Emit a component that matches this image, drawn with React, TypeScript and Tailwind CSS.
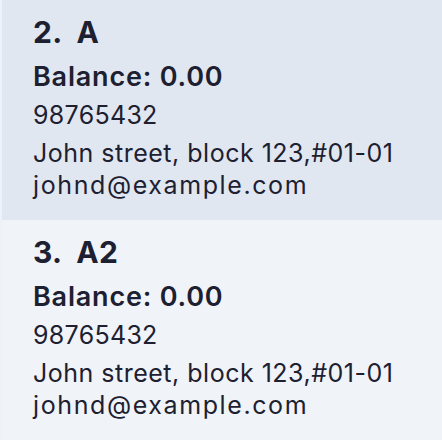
import React from "react";

const cards = [
  { idx: "2.", name: "A", bg: "bg-[#e1e7f0]" },
  { idx: "3.", name: "A2", bg: "bg-[#f0f3f8]" },
];

function Card({ idx, name, bg }: { idx: string; name: string; bg: string }) {
  return (
    <div className={`${bg} h-[220px] pl-[31px] pt-[14px] flex flex-col text-[#1d2030]`}>
      <div className="flex h-[36px] items-end leading-[36px] text-[30px] font-bold tracking-[0.3px]">
        <span>{idx}</span>
        <span className="ml-[14px]">{name}</span>
      </div>
      <div className="mt-[8px] h-[38px] leading-[38px] text-[27px] font-semibold tracking-[0.8px]">Balance: 0.00</div>
      <div className="h-[38px] leading-[38px] text-[25px] tracking-[0.3px]">98765432</div>
      <div className="h-[38px] leading-[38px] text-[25px] tracking-[0.5px]">John street, block 123,#01-01</div>
      <div className="-mt-[3px] h-[32px] leading-[32px] text-[25px] tracking-[1.6px]">johnd@example.com</div>
    </div>
  );
}

export default function App() {
  return (
    <div className="w-[442px] h-[440px] overflow-hidden flex bg-[#eef2f8]" style={{ fontFamily: "Inter, 'Noto Sans', sans-serif" }}>
      <div className="w-[2px] bg-[#eef2f8]" />
      <div className="flex-1 flex flex-col">
        {cards.map((c) => (
          <Card key={c.idx} {...c} />
        ))}
      </div>
    </div>
  );
}
